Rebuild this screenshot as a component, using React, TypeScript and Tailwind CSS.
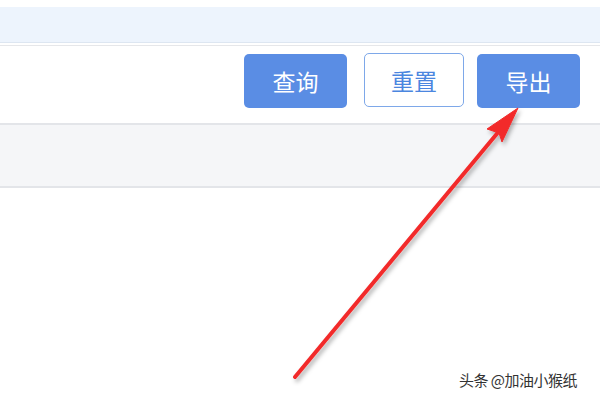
import React from 'react';

const cjk = '"Noto Sans CJK SC", "Liberation Sans", sans-serif';

export default function App() {
  return (
    <div className="relative w-[600px] h-[400px] bg-white overflow-hidden" style={{ fontFamily: cjk }}>
      {/* top banner */}
      <div className="h-[7px]" />
      <div className="h-[36px] bg-[#edf4fd] border-b border-[#dde6f1]" />
      <div className="h-[3px] border-b border-[#e6e7ea]" />

      {/* toolbar */}
      <div className="h-[77px] flex justify-end items-start pt-[7px] pr-[20px]">
        <button className="w-[103px] h-[54px] mt-[1px] rounded-[5px] bg-[#5a8de4] text-white text-[23px] leading-none">查询</button>
        <button className="w-[100px] h-[54px] ml-[17px] rounded-[5px] bg-white border border-[#7ea8e9] text-[#4b86df] text-[23px] leading-none">重置</button>
        <button className="w-[103px] h-[54px] mt-[1px] ml-[13px] rounded-[5px] bg-[#5a8de4] text-white text-[23px] leading-none">导出</button>
      </div>

      {/* table header */}
      <div className="h-[65px] bg-[#f5f6f8] border-y-2 border-[#e3e5e9]" />

      {/* arrow annotation */}
      <svg className="absolute inset-0" width="600" height="400" viewBox="0 0 600 400">
        <defs>
          <filter id="sh" x="-20%" y="-20%" width="140%" height="140%">
            <feDropShadow dx="2" dy="3" stdDeviation="2" floodColor="#000" floodOpacity="0.3" />
          </filter>
        </defs>
        <g filter="url(#sh)" fill="#f22b2b" stroke="#f22b2b">
          <line x1="295" y1="377" x2="500" y2="130" strokeWidth="4" strokeLinecap="round" />
          <polygon points="518,108 502,142 499,133 487,129" strokeWidth="1" strokeLinejoin="round" />
        </g>
      </svg>

      {/* watermark */}
      <div className="absolute left-[459px] top-[369px] text-[15px] text-[#333] tracking-[-0.5px]">头条 @加油小猴纸</div>
    </div>
  );
}
